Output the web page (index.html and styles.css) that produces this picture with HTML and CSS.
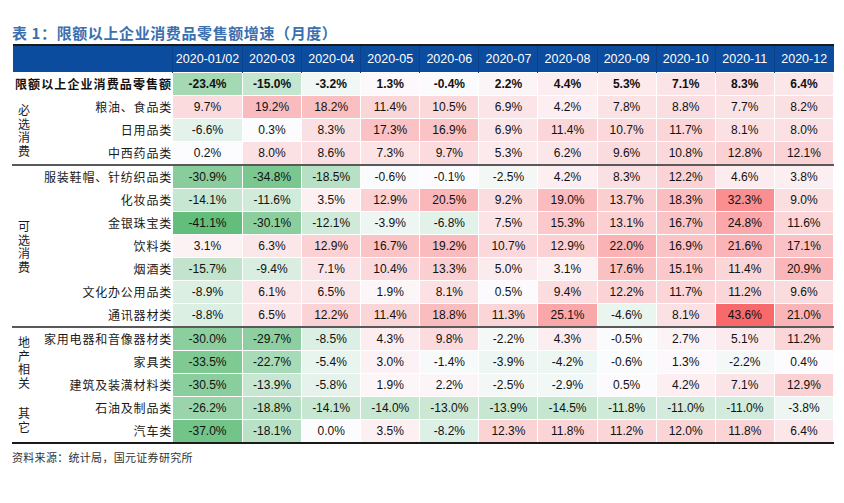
FILE: index.html
```html
<!DOCTYPE html>
<html lang="zh-CN">
<head>
<meta charset="utf-8">
<title>限额以上企业消费品零售额增速（月度）</title>
<link rel="stylesheet" href="styles.css">
</head>
<body>
<div class="page">
  <h1 class="title">表 1：限额以上企业消费品零售额增速（月度）</h1>
  <table class="grid">
    <colgroup>
      <col class="c-group"><col class="c-item"><col class="c-first">
      <col><col><col><col><col><col><col><col><col><col>
    </colgroup>
    <thead>
      <tr class="head">
        <th colspan="2"></th>
        <th>2020-01/02</th><th>2020-03</th><th>2020-04</th><th>2020-05</th><th>2020-06</th><th>2020-07</th><th>2020-08</th><th>2020-09</th><th>2020-10</th><th>2020-11</th><th>2020-12</th>
      </tr>
    </thead>
    <tbody>
      <tr class="total">
        <td colspan="2" class="total-label">限额以上企业消费品零售额</td>
        <td class="n" style="--v:-23.4">-23.4%</td><td class="n" style="--v:-15.0">-15.0%</td><td class="n" style="--v:-3.2">-3.2%</td><td class="p" style="--v:1.3">1.3%</td><td class="n" style="--v:-0.4">-0.4%</td><td class="p" style="--v:2.2">2.2%</td><td class="p" style="--v:4.4">4.4%</td><td class="p" style="--v:5.3">5.3%</td><td class="p" style="--v:7.1">7.1%</td><td class="p" style="--v:8.3">8.3%</td><td class="p" style="--v:6.4">6.4%</td>
      </tr>
      <tr>
        <td rowspan="3" class="group"><span class="vt">必选消费</span></td>
        <td class="item">粮油、食品类</td>
        <td class="p" style="--v:9.7">9.7%</td><td class="p" style="--v:19.2">19.2%</td><td class="p" style="--v:18.2">18.2%</td><td class="p" style="--v:11.4">11.4%</td><td class="p" style="--v:10.5">10.5%</td><td class="p" style="--v:6.9">6.9%</td><td class="p" style="--v:4.2">4.2%</td><td class="p" style="--v:7.8">7.8%</td><td class="p" style="--v:8.8">8.8%</td><td class="p" style="--v:7.7">7.7%</td><td class="p" style="--v:8.2">8.2%</td>
      </tr>
      <tr>
        <td class="item">日用品类</td>
        <td class="n" style="--v:-6.6">-6.6%</td><td class="p" style="--v:0.3">0.3%</td><td class="p" style="--v:8.3">8.3%</td><td class="p" style="--v:17.3">17.3%</td><td class="p" style="--v:16.9">16.9%</td><td class="p" style="--v:6.9">6.9%</td><td class="p" style="--v:11.4">11.4%</td><td class="p" style="--v:10.7">10.7%</td><td class="p" style="--v:11.7">11.7%</td><td class="p" style="--v:8.1">8.1%</td><td class="p" style="--v:8.0">8.0%</td>
      </tr>
      <tr>
        <td class="item">中西药品类</td>
        <td class="p" style="--v:0.2">0.2%</td><td class="p" style="--v:8.0">8.0%</td><td class="p" style="--v:8.6">8.6%</td><td class="p" style="--v:7.3">7.3%</td><td class="p" style="--v:9.7">9.7%</td><td class="p" style="--v:5.3">5.3%</td><td class="p" style="--v:6.2">6.2%</td><td class="p" style="--v:9.6">9.6%</td><td class="p" style="--v:10.8">10.8%</td><td class="p" style="--v:12.8">12.8%</td><td class="p" style="--v:12.1">12.1%</td>
      </tr>
      <tr class="sep">
        <td rowspan="7" class="group"><span class="vt">可选消费</span></td>
        <td class="item">服装鞋帽、针纺织品类</td>
        <td class="n" style="--v:-30.9">-30.9%</td><td class="n" style="--v:-34.8">-34.8%</td><td class="n" style="--v:-18.5">-18.5%</td><td class="n" style="--v:-0.6">-0.6%</td><td class="n" style="--v:-0.1">-0.1%</td><td class="n" style="--v:-2.5">-2.5%</td><td class="p" style="--v:4.2">4.2%</td><td class="p" style="--v:8.3">8.3%</td><td class="p" style="--v:12.2">12.2%</td><td class="p" style="--v:4.6">4.6%</td><td class="p" style="--v:3.8">3.8%</td>
      </tr>
      <tr>
        <td class="item">化妆品类</td>
        <td class="n" style="--v:-14.1">-14.1%</td><td class="n" style="--v:-11.6">-11.6%</td><td class="p" style="--v:3.5">3.5%</td><td class="p" style="--v:12.9">12.9%</td><td class="p" style="--v:20.5">20.5%</td><td class="p" style="--v:9.2">9.2%</td><td class="p" style="--v:19.0">19.0%</td><td class="p" style="--v:13.7">13.7%</td><td class="p" style="--v:18.3">18.3%</td><td class="p" style="--v:32.3">32.3%</td><td class="p" style="--v:9.0">9.0%</td>
      </tr>
      <tr>
        <td class="item">金银珠宝类</td>
        <td class="n" style="--v:-41.1">-41.1%</td><td class="n" style="--v:-30.1">-30.1%</td><td class="n" style="--v:-12.1">-12.1%</td><td class="n" style="--v:-3.9">-3.9%</td><td class="n" style="--v:-6.8">-6.8%</td><td class="p" style="--v:7.5">7.5%</td><td class="p" style="--v:15.3">15.3%</td><td class="p" style="--v:13.1">13.1%</td><td class="p" style="--v:16.7">16.7%</td><td class="p" style="--v:24.8">24.8%</td><td class="p" style="--v:11.6">11.6%</td>
      </tr>
      <tr>
        <td class="item">饮料类</td>
        <td class="p" style="--v:3.1">3.1%</td><td class="p" style="--v:6.3">6.3%</td><td class="p" style="--v:12.9">12.9%</td><td class="p" style="--v:16.7">16.7%</td><td class="p" style="--v:19.2">19.2%</td><td class="p" style="--v:10.7">10.7%</td><td class="p" style="--v:12.9">12.9%</td><td class="p" style="--v:22.0">22.0%</td><td class="p" style="--v:16.9">16.9%</td><td class="p" style="--v:21.6">21.6%</td><td class="p" style="--v:17.1">17.1%</td>
      </tr>
      <tr>
        <td class="item">烟酒类</td>
        <td class="n" style="--v:-15.7">-15.7%</td><td class="n" style="--v:-9.4">-9.4%</td><td class="p" style="--v:7.1">7.1%</td><td class="p" style="--v:10.4">10.4%</td><td class="p" style="--v:13.3">13.3%</td><td class="p" style="--v:5.0">5.0%</td><td class="p" style="--v:3.1">3.1%</td><td class="p" style="--v:17.6">17.6%</td><td class="p" style="--v:15.1">15.1%</td><td class="p" style="--v:11.4">11.4%</td><td class="p" style="--v:20.9">20.9%</td>
      </tr>
      <tr>
        <td class="item">文化办公用品类</td>
        <td class="n" style="--v:-8.9">-8.9%</td><td class="p" style="--v:6.1">6.1%</td><td class="p" style="--v:6.5">6.5%</td><td class="p" style="--v:1.9">1.9%</td><td class="p" style="--v:8.1">8.1%</td><td class="p" style="--v:0.5">0.5%</td><td class="p" style="--v:9.4">9.4%</td><td class="p" style="--v:12.2">12.2%</td><td class="p" style="--v:11.7">11.7%</td><td class="p" style="--v:11.2">11.2%</td><td class="p" style="--v:9.6">9.6%</td>
      </tr>
      <tr>
        <td class="item">通讯器材类</td>
        <td class="n" style="--v:-8.8">-8.8%</td><td class="p" style="--v:6.5">6.5%</td><td class="p" style="--v:12.2">12.2%</td><td class="p" style="--v:11.4">11.4%</td><td class="p" style="--v:18.8">18.8%</td><td class="p" style="--v:11.3">11.3%</td><td class="p" style="--v:25.1">25.1%</td><td class="n" style="--v:-4.6">-4.6%</td><td class="p" style="--v:8.1">8.1%</td><td class="p" style="--v:43.6">43.6%</td><td class="p" style="--v:21.0">21.0%</td>
      </tr>
      <tr class="sep">
        <td rowspan="3" class="group"><span class="vt">地产相关</span></td>
        <td class="item">家用电器和音像器材类</td>
        <td class="n" style="--v:-30.0">-30.0%</td><td class="n" style="--v:-29.7">-29.7%</td><td class="n" style="--v:-8.5">-8.5%</td><td class="p" style="--v:4.3">4.3%</td><td class="p" style="--v:9.8">9.8%</td><td class="n" style="--v:-2.2">-2.2%</td><td class="p" style="--v:4.3">4.3%</td><td class="n" style="--v:-0.5">-0.5%</td><td class="p" style="--v:2.7">2.7%</td><td class="p" style="--v:5.1">5.1%</td><td class="p" style="--v:11.2">11.2%</td>
      </tr>
      <tr>
        <td class="item">家具类</td>
        <td class="n" style="--v:-33.5">-33.5%</td><td class="n" style="--v:-22.7">-22.7%</td><td class="n" style="--v:-5.4">-5.4%</td><td class="p" style="--v:3.0">3.0%</td><td class="n" style="--v:-1.4">-1.4%</td><td class="n" style="--v:-3.9">-3.9%</td><td class="n" style="--v:-4.2">-4.2%</td><td class="n" style="--v:-0.6">-0.6%</td><td class="p" style="--v:1.3">1.3%</td><td class="n" style="--v:-2.2">-2.2%</td><td class="p" style="--v:0.4">0.4%</td>
      </tr>
      <tr>
        <td class="item">建筑及装潢材料类</td>
        <td class="n" style="--v:-30.5">-30.5%</td><td class="n" style="--v:-13.9">-13.9%</td><td class="n" style="--v:-5.8">-5.8%</td><td class="p" style="--v:1.9">1.9%</td><td class="p" style="--v:2.2">2.2%</td><td class="n" style="--v:-2.5">-2.5%</td><td class="n" style="--v:-2.9">-2.9%</td><td class="p" style="--v:0.5">0.5%</td><td class="p" style="--v:4.2">4.2%</td><td class="p" style="--v:7.1">7.1%</td><td class="p" style="--v:12.9">12.9%</td>
      </tr>
      <tr>
        <td rowspan="2" class="group"><span class="vt">其它</span></td>
        <td class="item">石油及制品类</td>
        <td class="n" style="--v:-26.2">-26.2%</td><td class="n" style="--v:-18.8">-18.8%</td><td class="n" style="--v:-14.1">-14.1%</td><td class="n" style="--v:-14.0">-14.0%</td><td class="n" style="--v:-13.0">-13.0%</td><td class="n" style="--v:-13.9">-13.9%</td><td class="n" style="--v:-14.5">-14.5%</td><td class="n" style="--v:-11.8">-11.8%</td><td class="n" style="--v:-11.0">-11.0%</td><td class="n" style="--v:-11.0">-11.0%</td><td class="n" style="--v:-3.8">-3.8%</td>
      </tr>
      <tr class="last">
        <td class="item">汽车类</td>
        <td class="n" style="--v:-37.0">-37.0%</td><td class="n" style="--v:-18.1">-18.1%</td><td class="p" style="--v:0.0">0.0%</td><td class="p" style="--v:3.5">3.5%</td><td class="n" style="--v:-8.2">-8.2%</td><td class="p" style="--v:12.3">12.3%</td><td class="p" style="--v:11.8">11.8%</td><td class="p" style="--v:11.2">11.2%</td><td class="p" style="--v:12.0">12.0%</td><td class="p" style="--v:11.8">11.8%</td><td class="p" style="--v:6.4">6.4%</td>
      </tr>
    </tbody>
  </table>
  <p class="source">资料来源：统计局，国元证券研究所</p>
</div>
</body>
</html>
```

FILE: styles.css
```css
html, body {
  margin: 0;
  padding: 0;
  background: #ffffff;
}

body {
  font-family: "Noto Sans CJK SC", "Liberation Sans", sans-serif;
  color: #111;
}

.page {
  padding: 23px 10px 0 12px;
}

.title {
  margin: 0 0 1px 0;
  font-size: 15px;
  line-height: 20px;
  font-weight: bold;
  letter-spacing: 0.6px;
  color: #3a6fb0;
}

.grid {
  width: 822px;
  table-layout: fixed;
  border-collapse: collapse;
  border-spacing: 0;
  border-top: 2px solid #1a1a1a;
  border-bottom: 2px solid #1a1a1a;
}

.c-group { width: 30px; }
.c-item { width: 130px; }
.c-first { width: 70px; }

.head th {
  height: 26px;
  padding: 0;
  background: #0c4c9e;
  color: #ffffff;
  font-family: "Liberation Sans", sans-serif;
  font-weight: normal;
  font-size: 12.5px;
  text-align: center;
  border-left: 1px solid #0a4189;
}

.head th:first-child {
  border-left: none;
}

.grid tbody td {
  height: 22px;
  padding: 0;
  font-size: 12px;
  line-height: 14px;
  text-align: center;
  font-family: "Liberation Sans", "Noto Sans CJK SC", sans-serif;
  border: 1px solid #ffffff;
  white-space: nowrap;
}

.grid tbody td.group,
.grid tbody td.item,
.grid tbody td.total-label {
  font-family: "Noto Sans CJK SC", sans-serif;
}

.total td {
  font-weight: bold;
}

.total-label {
  text-align: left !important;
  letter-spacing: 1.1px;
  padding-left: 2px !important;
}

.item {
  text-align: right !important;
  letter-spacing: 0.8px;
  color: #1a1a1a;
}

.group {
  text-align: left !important;
  padding-left: 5px !important;
  vertical-align: middle;
}

.vt {
  display: block;
  width: 12px;
  font-size: 12px;
  line-height: 13.5px;
  white-space: normal;
  word-break: break-all;
  color: #1a1a1a;
}

.grid tbody tr.sep td {
  border-top: 2px solid #595959;
}

.p {
  --t: calc(var(--v) / 43.6);
  background: rgb(calc(252 - 4 * var(--t)), calc(252 - 147 * var(--t)), calc(255 - 148 * var(--t)));
}

.n {
  --s: calc(var(--v) / -41.1);
  background: rgb(calc(252 - 153 * var(--s)), calc(252 - 62 * var(--s)), calc(255 - 132 * var(--s)));
}

.source {
  margin: 5px 0 0 0;
  font-size: 11px;
  line-height: 16px;
  color: #333;
  letter-spacing: 0.3px;
}
```
